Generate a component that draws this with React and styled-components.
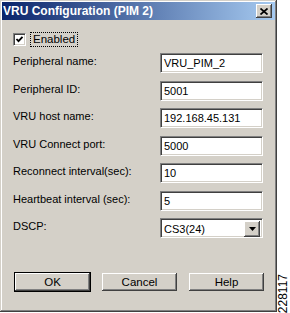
import React from 'react'
import styled, { createGlobalStyle } from 'styled-components'

const GlobalStyle = createGlobalStyle`
  html, body {
    margin: 0;
    padding: 0;
    background: #ffffff;
  }
  body {
    font-family: "Liberation Sans", Arial, sans-serif;
  }
`

const fields = [
  { label: 'Peripheral name:', value: 'VRU_PIM_2' },
  { label: 'Peripheral ID:', value: '5001' },
  { label: 'VRU host name:', value: '192.168.45.131' },
  { label: 'VRU Connect port:', value: '5000' },
  { label: 'Reconnect interval(sec):', value: '10' },
  { label: 'Heartbeat interval (sec):', value: '5' }
]

const App = () => (
  <Page>
    <GlobalStyle />
    <Window>
      <TitleBar>
        <Title>VRU Configuration (PIM 2)</Title>
        <CloseButton>
          <svg width="8" height="7" viewBox="0 0 8 7">
            <path d="M0.5 0.5 L7.5 6.5 M7.5 0.5 L0.5 6.5" stroke="#000" strokeWidth="1.7" />
          </svg>
        </CloseButton>
      </TitleBar>
      <Body>
        <CheckRow>
          <CheckBox>
            <svg width="9" height="9" viewBox="0 0 9 9">
              <path d="M1.5 4 L3.5 6.2 L7.5 1.8" stroke="#000" strokeWidth="1.8" fill="none" />
            </svg>
          </CheckBox>
          <FocusLabel>Enabled</FocusLabel>
        </CheckRow>
        <Form>
          {fields.map(field => (
            <Row key={field.label}>
              <Label>{field.label}</Label>
              <Field>{field.value}</Field>
            </Row>
          ))}
          <Row>
            <Label>DSCP:</Label>
            <Select>
              <SelectText>CS3(24)</SelectText>
              <DropButton>
                <svg width="7" height="4" viewBox="0 0 7 4">
                  <path d="M0 0 H7 L3.5 4 Z" fill="#000" />
                </svg>
              </DropButton>
            </Select>
          </Row>
        </Form>
        <ButtonBar>
          <Button isDefault>OK</Button>
          <Button>Cancel</Button>
          <Button>Help</Button>
        </ButtonBar>
      </Body>
    </Window>
    <Side>
      <Tag>228117</Tag>
    </Side>
  </Page>
)

const Page = styled.div`
  display: flex;
  width: 290px;
  height: 313px;
  overflow: hidden;
`

const Window = styled.div`
  box-sizing: border-box;
  width: 277px;
  height: 312px;
  padding: 2px;
  background: #d4d0c8;
  box-shadow: inset -1px -1px #404040, inset 1px 1px #d4d0c8,
    inset -2px -2px #808080, inset 2px 2px #ffffff;
  display: flex;
  flex-direction: column;
`

const TitleBar = styled.div`
  display: flex;
  align-items: center;
  justify-content: space-between;
  height: 18px;
  padding: 0 3px 0 1px;
  background: linear-gradient(to right, #0a246a, #a6caf0);
`

const Title = styled.span`
  color: #ffffff;
  font-size: 12px;
  font-weight: bold;
  line-height: 18px;
  white-space: nowrap;
`

const CloseButton = styled.div`
  display: flex;
  align-items: center;
  justify-content: center;
  width: 16px;
  height: 14px;
  background: #d4d0c8;
  box-shadow: inset -1px -1px #404040, inset 1px 1px #ffffff,
    inset -2px -2px #808080, inset 2px 2px #d4d0c8;
`

const Body = styled.div`
  display: flex;
  flex-direction: column;
  padding: 12px 0 0 11px;
`

const CheckRow = styled.div`
  display: flex;
  align-items: center;
  height: 15px;
  gap: 4px;
`

const CheckBox = styled.div`
  box-sizing: border-box;
  display: flex;
  align-items: center;
  justify-content: center;
  width: 13px;
  height: 13px;
  background: #ffffff;
  border-top: 1px solid #808080;
  border-left: 1px solid #808080;
  border-bottom: 1px solid #ffffff;
  border-right: 1px solid #ffffff;
  box-shadow: inset 1px 1px #404040, inset -1px -1px #d4d0c8;
`

const FocusLabel = styled.span`
  font-size: 11.5px;
  line-height: 13px;
  padding: 0 2px;
  border: 1px dotted #000000;
  color: #000000;
`

const Form = styled.div`
  display: flex;
  flex-direction: column;
  margin-top: 6px;
`

const Row = styled.div`
  display: grid;
  grid-template-columns: 147px 103px;
  align-items: start;
  height: 20px;

  & + & {
    margin-top: 7px;
  }
  &:nth-child(even) {
    margin-top: 8px;
  }
`

const Label = styled.span`
  font-size: 11px;
  line-height: 14px;
  margin-top: 1px;
  color: #000000;
  white-space: nowrap;
`

const sunken = `
  box-sizing: border-box;
  height: 20px;
  background: #ffffff;
  border-top: 1px solid #808080;
  border-left: 1px solid #808080;
  border-bottom: 1px solid #ffffff;
  border-right: 1px solid #ffffff;
  box-shadow: inset 1px 1px #404040, inset -1px -1px #d4d0c8;
`

const Field = styled.div`
  ${sunken}
  padding: 0 3px;
  font-size: 11px;
  line-height: 18px;
  color: #000000;
  white-space: nowrap;
`

const Select = styled.div`
  ${sunken}
  display: flex;
  align-items: center;
  padding: 2px 2px 1px 3px;
`

const SelectText = styled.span`
  flex: 1;
  font-size: 11px;
  color: #000000;
`

const DropButton = styled.div`
  display: flex;
  align-items: center;
  justify-content: center;
  width: 16px;
  height: 16px;
  background: #d4d0c8;
  box-shadow: inset -1px -1px #404040, inset 1px 1px #ffffff,
    inset -2px -2px #808080, inset 2px 2px #d4d0c8;
`

const ButtonBar = styled.div`
  display: flex;
  gap: 10px;
  margin: 34px 0 0 1px;
`

const Button = styled.div`
  box-sizing: border-box;
  display: flex;
  align-items: center;
  justify-content: center;
  width: 77px;
  height: 20px;
  font-size: 11.5px;
  color: #000000;
  background: #d4d0c8;
  border: 1px solid ${p => (p.isDefault ? '#000000' : 'transparent')};
  box-shadow: inset -1px -1px #404040, inset 1px 1px #ffffff,
    inset -2px -2px #808080, inset 2px 2px #d4d0c8;
`

const Side = styled.div`
  display: flex;
  flex-direction: column;
  justify-content: flex-end;
  align-items: center;
  width: 13px;
`

const Tag = styled.span`
  writing-mode: vertical-rl;
  transform: rotate(180deg);
  font-size: 12px;
  line-height: 11px;
  color: #000000;
`

export default App
